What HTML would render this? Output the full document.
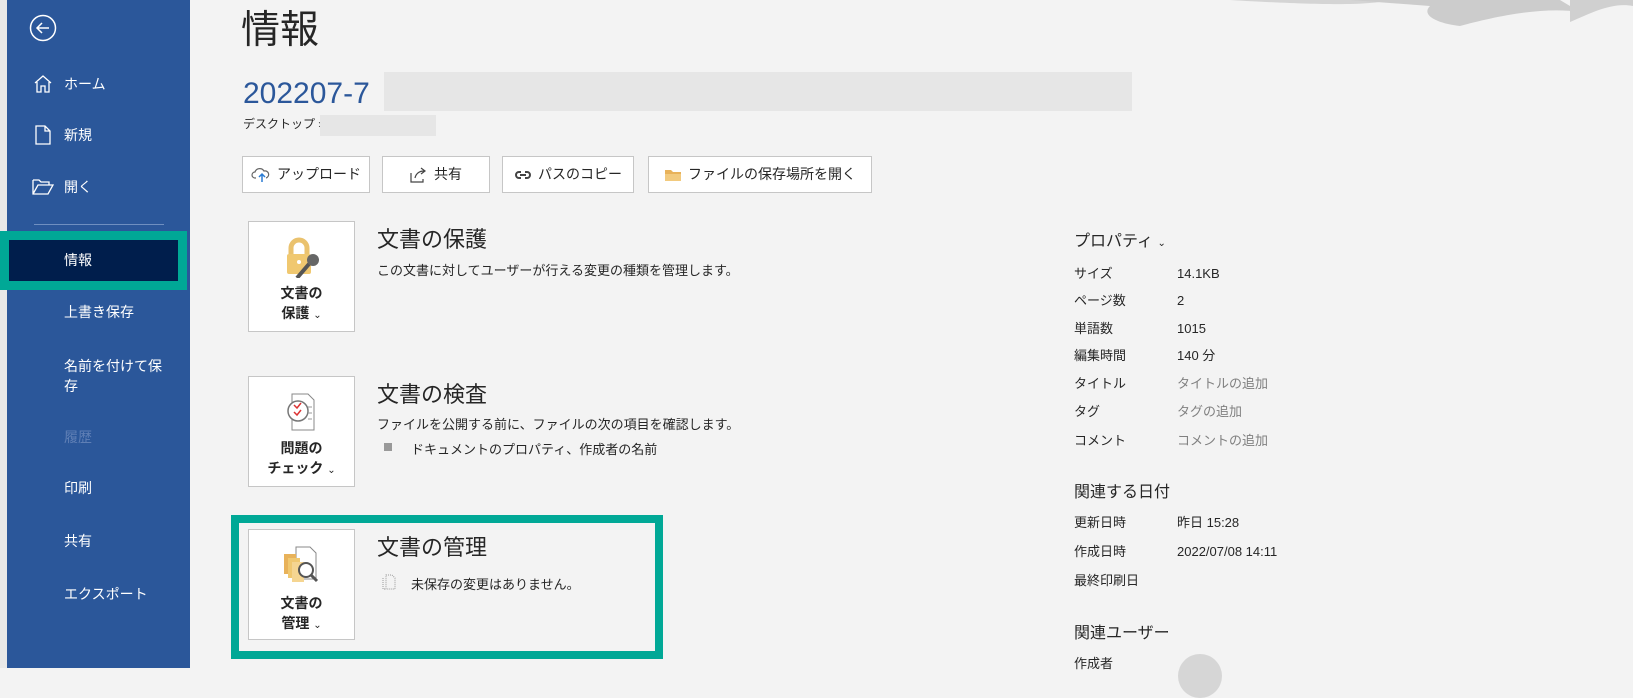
<!DOCTYPE html>
<html><head><meta charset="utf-8"><style>
*{margin:0;padding:0;box-sizing:border-box}
body{width:1633px;height:668px;overflow:hidden;background:#f3f3f3;font-family:"Liberation Sans","Noto Sans CJK JP",sans-serif;position:relative;color:#262626}
.a{position:absolute;white-space:nowrap}
#side{position:absolute;left:7px;top:0;width:183px;height:668px;background:#2b579a}
.nav{position:absolute;color:#fff;font-size:14px;line-height:20px}
.btn{position:absolute;top:156px;height:37px;background:#fff;border:1px solid #c6c6c6;font-size:14px;line-height:35px;display:flex;align-items:center;justify-content:center;gap:6px}
.card{position:absolute;left:248px;width:107px;height:111px;background:#fff;border:1px solid #c6c6c6;text-align:center;font-weight:bold;font-size:14px;line-height:20px}
.t{font-size:22px;color:#262626}
.d{font-size:13px}
.pl{position:absolute;left:1074px;font-size:13px;line-height:18px}
.pv{position:absolute;left:1177px;font-size:13px;line-height:18px}
.g{color:#808080}
</style></head><body>
<div style="position:absolute;left:0;top:0;width:7px;height:668px;background:#e8e8e8"></div>
<div id="side"></div>
<svg class="a" style="left:28px;top:14px" width="30" height="30" viewBox="0 0 30 30"><circle cx="15" cy="14" r="12.5" fill="none" stroke="#fff" stroke-width="1.5"/><path d="M21 14H9M14 9l-5 5 5 5" fill="none" stroke="#fff" stroke-width="1.5"/></svg>
<svg class="a" style="left:33px;top:74px" width="20" height="20" viewBox="0 0 20 20"><path d="M2 9L10 2l8 7M4 8v10h4v-6h4v6h4V8" fill="none" stroke="#fff" stroke-width="1.3"/></svg>
<div class="nav" style="left:64px;top:74px">ホーム</div>
<svg class="a" style="left:35px;top:125px" width="16" height="20" viewBox="0 0 16 20"><path d="M1 1h9l5 5v13H1zM10 1v5h5" fill="none" stroke="#fff" stroke-width="1.3"/></svg>
<div class="nav" style="left:64px;top:125px">新規</div>
<svg class="a" style="left:32px;top:179px" width="22" height="16" viewBox="0 0 22 16"><path d="M1 1h6l2 2h8v3M1 1v14h15l5-9H6L1 15" fill="none" stroke="#fff" stroke-width="1.3"/></svg>
<div class="nav" style="left:64px;top:177px">開く</div>
<div class="a" style="left:34px;top:224px;width:130px;height:1px;background:#6f8fc0"></div>
<div class="a" style="left:0;top:231px;width:187px;height:59px;border:9px solid #00a896;background:#001e4c"></div>
<div class="nav" style="left:64px;top:250px">情報</div>
<div class="nav" style="left:64px;top:302px">上書き保存</div>
<div class="nav" style="left:64px;top:356px">名前を付けて保<br>存</div>
<div class="nav" style="left:64px;top:427px;color:#5f7fb5">履歴</div>
<div class="nav" style="left:64px;top:478px">印刷</div>
<div class="nav" style="left:64px;top:531px">共有</div>
<div class="nav" style="left:64px;top:584px">エクスポート</div>

<svg class="a" style="left:1230px;top:0" width="403" height="50" viewBox="0 0 403 50"><path d="M0 0h160c-20 5-60 6-160 0z" fill="#d4d4d4"/><path d="M120 0h210l20 12c-40-6-90 6-120 14-20-2-40-10-30-20z" fill="#cccccc"/><path d="M340 0h63v6c-20-4-40 6-63 16z" fill="#d0d0d0"/></svg>

<div class="a" style="left:241px;top:6px;font-size:39px;line-height:50px;color:#262626">情報</div>
<div class="a" style="left:243px;top:76px;font-size:30px;line-height:36px;color:#2b579a">202207-7</div>
<div class="a" style="left:384px;top:72px;width:748px;height:39px;background:#e6e6e6"></div>
<div class="a" style="left:243px;top:116px;font-size:12px;line-height:16px">デスクトップ »</div>
<div class="a" style="left:320px;top:115px;width:116px;height:21px;background:#e6e6e6"></div>

<div class="btn" style="left:242px;width:128px"><svg width="20" height="16" viewBox="0 0 20 16"><path d="M5 11H4a3 3 0 010-6 5 5 0 019-1 3.5 3.5 0 012 7" fill="none" stroke="#666" stroke-width="1.2"/><path d="M11 15V8M8 10l3-3 3 3" fill="none" stroke="#2b7cd3" stroke-width="1.5"/></svg>アップロード</div>
<div class="btn" style="left:382px;width:108px"><svg width="18" height="16" viewBox="0 0 18 16"><path d="M1 6v9h12v-3M5 11c1-5 5-7 9-7M11 1l4 3-4 3" fill="none" stroke="#444" stroke-width="1.2"/></svg>共有</div>
<div class="btn" style="left:502px;width:132px"><svg width="18" height="12" viewBox="0 0 18 12"><path d="M7 3H5a3 3 0 000 6h2M11 3h2a3 3 0 010 6h-2M6 6h6" fill="none" stroke="#444" stroke-width="2"/></svg>パスのコピー</div>
<div class="btn" style="left:648px;width:224px"><svg width="18" height="14" viewBox="0 0 18 14"><path d="M1 2h6l2 2h8v9H1z" fill="#e8b25a"/><path d="M1 6h16v7H1z" fill="#f2ca7e"/></svg>ファイルの保存場所を開く</div>

<div class="card" style="top:221px"><svg style="margin-top:14px" width="40" height="42" viewBox="0 0 40 42"><path d="M9 18v-6a8 8 0 0116 0v6" fill="none" stroke="#eac26e" stroke-width="5"/><rect x="5" y="18" width="24" height="20" rx="2" fill="#f0c870"/><circle cx="17" cy="26" r="2" fill="#fff"/><path d="M15 42l12-14" stroke="#555" stroke-width="4"/><circle cx="31" cy="24" r="6" fill="#666"/></svg><div>文書の<br>保護 <span style="font-weight:normal;font-size:10px">⌄</span></div></div>
<div class="a t" style="left:377px;top:222px">文書の保護</div>
<div class="a d" style="left:377px;top:260px">この文書に対してユーザーが行える変更の種類を管理します。</div>

<div class="card" style="top:376px"><svg style="margin-top:14px" width="40" height="42" viewBox="0 0 40 42"><path d="M10 3h16l6 6v30H10z" fill="#fff" stroke="#888"/><circle cx="16" cy="20" r="10" fill="#fff" stroke="#777" stroke-width="1.5"/><path d="M12 14l3 3 4-5M12 21l3 3 4-5" fill="none" stroke="#d33" stroke-width="1.5"/><path d="M26 16h4M26 22h4M26 28h4" stroke="#999"/></svg><div>問題の<br>チェック <span style="font-weight:normal;font-size:10px">⌄</span></div></div>
<div class="a t" style="left:377px;top:377px">文書の検査</div>
<div class="a d" style="left:377px;top:414px">ファイルを公開する前に、ファイルの次の項目を確認します。</div>
<div class="a" style="left:384px;top:443px;width:8px;height:8px;background:#999"></div>
<div class="a d" style="left:411px;top:439px">ドキュメントのプロパティ、作成者の名前</div>

<div class="a" style="left:231px;top:515px;width:432px;height:144px;border:8px solid #00a896"></div>
<div class="card" style="top:529px"><svg style="margin-top:14px" width="44" height="44" viewBox="0 0 44 44"><path d="M16 3h14l6 6v26H16z" fill="#fff" stroke="#888"/><rect x="4" y="10" width="12" height="20" fill="#e8b25a"/><rect x="8" y="14" width="12" height="20" fill="#f0c870"/><rect x="12" y="18" width="12" height="20" fill="#f5d591"/><circle cx="26" cy="26" r="7" fill="#fff" stroke="#555" stroke-width="2"/><path d="M31 31l6 6" stroke="#555" stroke-width="3"/></svg><div>文書の<br>管理 <span style="font-weight:normal;font-size:10px">⌄</span></div></div>
<div class="a t" style="left:377px;top:530px">文書の管理</div>
<svg class="a" style="left:382px;top:574px" width="14" height="16" viewBox="0 0 14 16"><path d="M4 1h6l3 3v11H4zM1 4v11h3" fill="none" stroke="#999" stroke-dasharray="1 1"/></svg>
<div class="a d" style="left:411px;top:574px">未保存の変更はありません。</div>

<div class="pl" style="top:231px;font-size:16px;line-height:22px">プロパティ <span style="font-size:10px">⌄</span></div>
<div class="pl" style="top:265px">サイズ</div><div class="pv" style="top:265px">14.1KB</div>
<div class="pl" style="top:292px">ページ数</div><div class="pv" style="top:292px">2</div>
<div class="pl" style="top:320px">単語数</div><div class="pv" style="top:320px">1015</div>
<div class="pl" style="top:347px">編集時間</div><div class="pv" style="top:347px">140 分</div>
<div class="pl" style="top:375px">タイトル</div><div class="pv g" style="top:375px">タイトルの追加</div>
<div class="pl" style="top:403px">タグ</div><div class="pv g" style="top:403px">タグの追加</div>
<div class="pl" style="top:432px">コメント</div><div class="pv g" style="top:432px">コメントの追加</div>
<div class="pl" style="top:482px;font-size:16px;line-height:22px">関連する日付</div>
<div class="pl" style="top:514px">更新日時</div><div class="pv" style="top:514px">昨日 15:28</div>
<div class="pl" style="top:543px">作成日時</div><div class="pv" style="top:543px">2022/07/08 14:11</div>
<div class="pl" style="top:572px">最終印刷日</div>
<div class="pl" style="top:623px;font-size:16px;line-height:22px">関連ユーザー</div>
<div class="pl" style="top:655px">作成者</div>
<div class="a" style="left:1178px;top:654px;width:44px;height:44px;border-radius:50%;background:#d6d6d6"></div>
</body></html>
